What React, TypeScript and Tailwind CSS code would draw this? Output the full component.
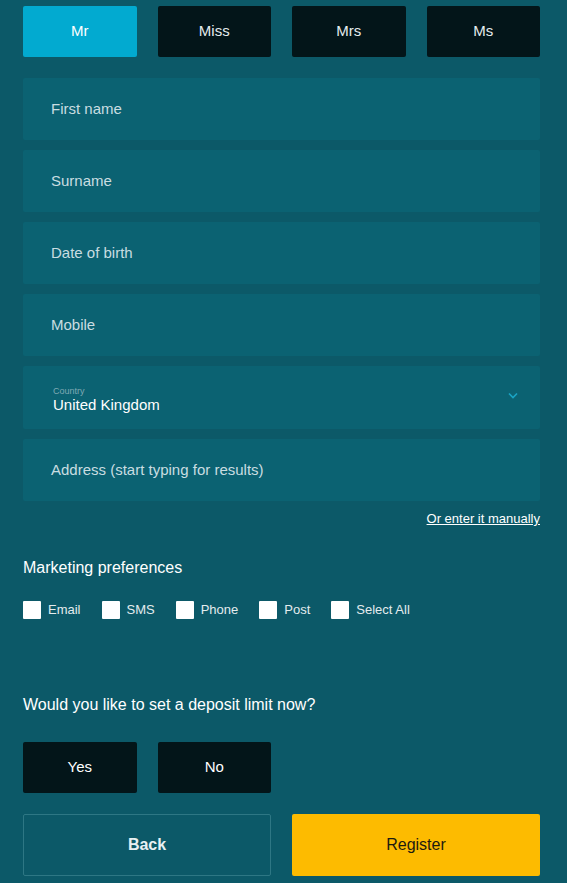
import { useState } from 'react';

const titles = ['Mr', 'Miss', 'Mrs', 'Ms'];
const fields = ['First name', 'Surname', 'Date of birth', 'Mobile'];
const prefs = ['Email', 'SMS', 'Phone', 'Post', 'Select All'];

function Field({ label }: { label: string }) {
  return (
    <div className="h-[62px] bg-[#0b6272] rounded-[2px] flex items-center pl-[28px] text-[15px] text-[#c9dde1]">
      {label}
    </div>
  );
}

export default function App() {
  const [title, setTitle] = useState('Mr');

  return (
    <div
      className="min-h-[883px] w-[567px] bg-[#0c5968] px-[23px] pt-[6px] text-white"
      style={{ fontFamily: '"Liberation Sans", Arial, sans-serif' }}
    >
      <div className="grid grid-cols-4 gap-[21px] w-[517px]">
        {titles.map((t) => (
          <button
            key={t}
            onClick={() => setTitle(t)}
            className={
              t === title
                ? 'h-[51px] rounded-[2px] bg-[#02aad0] text-[15px] text-white'
                : 'h-[51px] rounded-[2px] bg-[#031519] text-[15px] text-[#e4ecee]'
            }
          >
            {t}
          </button>
        ))}
      </div>

      <div className="mt-[21px] flex flex-col gap-[10px] w-[517px]">
        {fields.map((f) => (
          <Field key={f} label={f} />
        ))}
        <div className="h-[63px] bg-[#0b6272] rounded-[2px] flex items-center justify-between pl-[30px] pr-[22px]">
          <div className="flex flex-col pt-[4px]">
            <span className="text-[9px] leading-[10px] text-[#7fa9b2]">Country</span>
            <span className="text-[15px] leading-[18px] text-white">United Kingdom</span>
          </div>
          <svg width="10" height="7" viewBox="0 0 10 7" className="mt-[-4px]">
            <path d="M1 1.5 L5 5.5 L9 1.5" fill="none" stroke="#1aa4c4" strokeWidth="1.6" />
          </svg>
        </div>
        <Field label="Address (start typing for results)" />
      </div>

      <div className="mt-[9px] w-[517px] flex justify-end">
        <a className="text-[13px] leading-[18px] underline text-white">Or enter it manually</a>
      </div>

      <div className="mt-[30px] text-[16px] leading-[20px]">Marketing preferences</div>

      <div className="mt-[22px] flex items-center">
        {prefs.map((p) => (
          <label key={p} className="flex items-center mr-[21px] text-[13px] text-[#e4ecee]">
            <span className="w-[18px] h-[18px] bg-white rounded-[1px] mr-[7px]" />
            {p}
          </label>
        ))}
      </div>

      <div className="mt-[75px] text-[16px] leading-[20px]">Would you like to set a deposit limit now?</div>

      <div className="mt-[27px] grid grid-cols-4 gap-[21px] w-[517px]">
        <button className="h-[51px] rounded-[2px] bg-[#031519] text-[15px]">Yes</button>
        <button className="h-[51px] rounded-[2px] bg-[#031519] text-[15px]">No</button>
      </div>

      <div className="mt-[21px] grid grid-cols-2 gap-[21px] w-[517px]">
        <button className="h-[62px] rounded-[2px] border border-[#2e7784] text-[16px] font-bold text-[#e8f0f2]">
          Back
        </button>
        <button className="h-[62px] rounded-[2px] bg-[#fdbb00] text-[16px] text-[#1c1a10]">Register</button>
      </div>
    </div>
  );
}
